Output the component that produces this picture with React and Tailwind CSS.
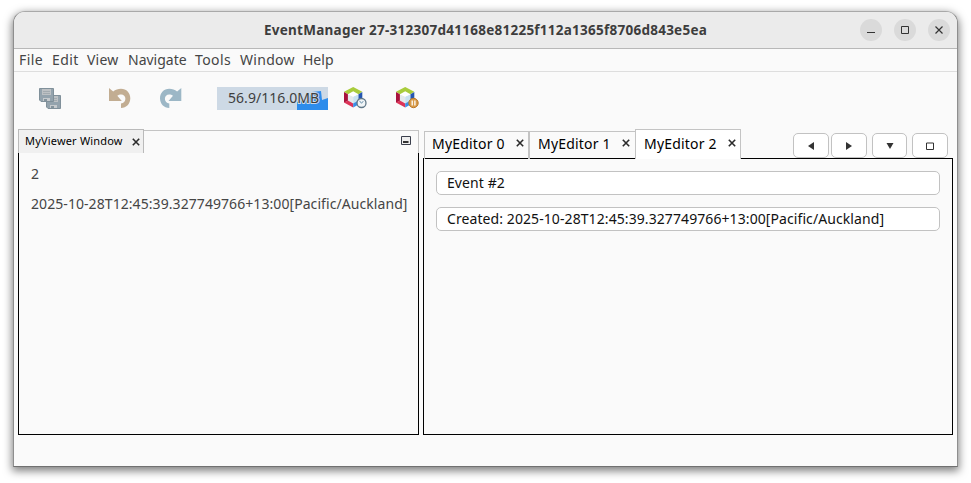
import React from "react";

const CUBE = (
  <>
    <path d="M3.800 7.300 9.200 9.500v7.800l-5.400-3.400z" fill="#e4eaec" />
    <path d="M9.200 9.500l5.400-2.400v6.700l-5.400 3.500z" fill="#c9e2f0" />
    <path d="M9.200 4.600 14.600 7.200 9.200 9.700 3.800 7.300z" fill="#fff" />
    <path d="M9.200 0 18.300 4.700 14.500 7.200 9.200 4.300 3.900 7.200 0 4.700z" fill="#a9cc3c" />
    <path d="M0 4.900 3.900 7.200v6.500L0 15.700z" fill="#a8123c" />
    <path d="M0 15.600 3.900 13.500 9.200 16.500V20.500z" fill="#dc3458" />
    <path d="M18.300 4.900 14.500 7.200v6.500l3.800 2z" fill="#2456b0" />
    <path d="M18.300 15.600 14.500 13.500 9.200 16.500V20.500z" fill="#3b8ee6" />
  </>
);

function ProfileIcon() {
  return (
    <svg className="block" width="24" height="22" viewBox="0 0 24 22">
      {CUBE}
      <circle cx="17.500" cy="16" r="4.500" fill="#f1f5f7" stroke="#617888" strokeWidth="1.300" />
      <path d="M15.500 13.800 17.500 16.300l1.800-2.200" fill="none" stroke="#6d93ad" strokeWidth="1" />
    </svg>
  );
}

function PauseIcon() {
  return (
    <svg className="block" width="24" height="22" viewBox="0 0 24 22">
      {CUBE}
      <circle cx="17.500" cy="16" r="4.700" fill="#d89a48" stroke="#b97728" strokeWidth="1" />
      <path d="M16.200 13.500v5M18.900 13.500v5" stroke="#fff" strokeWidth="1.300" />
    </svg>
  );
}

function Floppy({ x, y }) {
  return (
    <g transform={`translate(${x} ${y})`}>
      <path d="M.5.500h14v13H2l-1.500-1.500z" fill="#94a3ad" stroke="#80909a" />
      <path d="M3 1h9v6H3z" fill="#bdc1c4" />
      <path d="M4 3.500h7M4 5.500h7" stroke="#a3abb0" strokeWidth="1" />
      <path d="M4 10h7v3H4z" fill="#c6cacd" />
      <path d="M5 11h3v2H5z" fill="#85949d" />
    </g>
  );
}

function SaveAllIcon() {
  return (
    <svg className="block" width="23" height="22" viewBox="0 0 23 22">
      <Floppy x={7} y={7} />
      <Floppy x={0} y={0} />
    </svg>
  );
}

const ARROW = "M0 0 4.200 3.600C6.500 1.600 9 .800 12 .800 17.500 .800 21.300 5 21.300 10.300 21.300 15.800 17.500 20 12 20V15.500C14.600 15.200 16.400 13.200 16.400 10.700 16.400 8 14.600 6.400 12.200 6.400 10.600 6.400 9.400 6.900 8.300 7.800L12.800 12.900H0z";

function CloseX({ className }) {
  return (
    <svg className={className} width="8" height="8" viewBox="0 0 8 8">
      <path d="M.800.800l6.400 6.400M7.200.800L.800 7.200" stroke="#2b2b2b" strokeWidth="1.600" />
    </svg>
  );
}

function WindowButton({ children }) {
  return (
    <div className="flex size-[22px] items-center justify-center rounded-full bg-[#dadada]">
      <svg width="10" height="10" viewBox="0 0 10 10" fill="none" stroke="#333">{children}</svg>
    </div>
  );
}

function NavButton({ className, children }) {
  return (
    <div className={`flex h-[25px] items-center justify-center rounded-[5px] border border-[#c2c2c2] bg-white ${className}`}>
      <svg width="8" height="8" viewBox="0 0 8 8" fill="#333">{children}</svg>
    </div>
  );
}

function Field({ children }) {
  return (
    <div className="h-6 rounded-[5px] border border-[#c2c2c2] bg-white pl-[10px] text-[14px] leading-[22px] tracking-[0.085px] text-[#111] whitespace-nowrap">
      {children}
    </div>
  );
}

function EditorTab({ name, className }) {
  return (
    <div className={`flex shrink-0 items-start border-t border-r text-[14px] leading-[20px] text-black ${className}`}>
      <span className="w-[84px] whitespace-nowrap tracking-[0.2px]">{name}</span>
      <CloseX className="mt-[5px] shrink-0" />
    </div>
  );
}

export default function App() {
  return (
    <div className="h-[483px] w-[971px] overflow-hidden bg-white pt-[11px] pl-[13px] font-['Noto_Sans',sans-serif]">
      <div className="flex h-[456px] w-[945px] flex-col overflow-hidden rounded-t-[12px] border border-[#8e8e8e] border-t-[#a9a9a9] border-b-[#707070] bg-[#fafafa] shadow-[0_3px_9px_1px_rgba(0,0,0,0.5)]">
        <header className="flex h-[37px] shrink-0 items-center border-b border-[#b8b8b8] bg-[#ebebeb]">
          <h1 className="ml-[250px] w-[596px] whitespace-nowrap text-[13.5px] font-bold tracking-[0.255px] text-[#3d3d3d]">
            EventManager 27-312307d41168e81225f112a1365f8706d843e5ea
          </h1>
          <div className="flex gap-3">
            <WindowButton><path d="M1 7.500h8" /></WindowButton>
            <WindowButton><path d="M1.500 1.500h7v7h-7z" /></WindowButton>
            <WindowButton><path d="M1.500 1.500l7 7M8.500 1.500l-7 7" strokeWidth="1.200" /></WindowButton>
          </div>
        </header>

        <nav className="flex h-[23px] shrink-0 items-start border-b border-[#dedede] pl-[5px] text-[14px] leading-[21px] text-[#454545]">
          <span className="w-[33px] tracking-[0.4px]">File</span>
          <span className="w-[35px] tracking-[0.4px]">Edit</span>
          <span className="w-[41px] tracking-[0.2px]">View</span>
          <span className="w-[67px]">Navigate</span>
          <span className="w-[45px] tracking-[0.4px]">Tools</span>
          <span className="w-[63px] tracking-[0.3px]">Window</span>
          <span>Help</span>
        </nav>

        <div className="flex h-[57px] shrink-0 items-start pt-[15px] pl-[25px]">
          <div className="mt-px w-[70px]"><SaveAllIcon /></div>
          <svg className="mr-[29px] mt-px block" width="22" height="21" viewBox="0 0 22 21">
            <path d={ARROW} fill="#c2ad92" />
          </svg>
          <svg className="mr-[35px] mt-px block" width="22" height="21" viewBox="0 0 22 21">
            <path d={ARROW} transform="matrix(-1 0 0 1 21.300 0)" fill="#9cb7c6" />
          </svg>
          <div className="relative h-[23px] w-[111px] bg-[#cdd9e5]">
            <svg className="absolute inset-0" width="111" height="23" viewBox="0 0 111 23">
              <path d="M80 23V15l4-2 8-2 3-6 9-1 1 9 6-2v12z" fill="#2d8ceb" />
            </svg>
            <span className="absolute left-[11px] top-0 whitespace-nowrap text-[14px] leading-[22px] tracking-[0.05px] text-[#3e3e3e] [paint-order:stroke] [-webkit-text-stroke:2px_#cdd9e5]">
              56.9/116.0MB
            </span>
          </div>
          <div className="ml-4"><ProfileIcon /></div>
          <div className="ml-[28px]"><PauseIcon /></div>
        </div>

        <main className="flex h-[306px] shrink-0 items-start gap-1 pl-1">
          <section className="flex h-[306px] w-[401px] flex-col">
            <div className="flex h-6 shrink-0 items-start">
              <div className="flex h-6 w-[126px] items-center border border-b-0 border-[#bababa] bg-[#f0f0f0] pl-[6px] text-[11px] text-black">
                <span className="w-[107px] whitespace-nowrap tracking-[0.18px]">MyViewer Window</span>
                <CloseX className="shrink-0" />
              </div>
              <div className="mt-px flex h-[23px] flex-1 items-start justify-end border-r border-t border-[#c4c4c4] pr-[7px] pt-[5px]">
                <svg width="10" height="9" viewBox="0 0 10 9">
                  <path d="M.5.500h9v8h-9z" fill="#eee" stroke="#3a3f4c" />
                  <path d="M2 5h5.500v2H2z" fill="#333" />
                </svg>
              </div>
            </div>
            <div className="flex-1 border border-t-0 border-black pl-3 pt-[11px] text-[14px] leading-[20px] text-[#454545]">
              <p className="mb-[10px]">2</p>
              <p className="whitespace-nowrap tracking-[0.07px]">2025-10-28T12:45:39.327749766+13:00[Pacific/Auckland]</p>
            </div>
          </section>

          <section className="flex h-[306px] w-[530px] flex-col">
            <div className="flex h-[30px] shrink-0 items-end">
              <div className="flex h-[30px] w-[318px] items-end">
                <div className="h-px w-px bg-black" />
                <EditorTab name="MyEditor 0" className="h-[28px] w-[105px] border-l border-[#c4c4c4] pl-[7px] pt-[2px] shadow-[inset_0_-1px_0_#000]" />
                <EditorTab name="MyEditor 1" className="h-[28px] w-[106px] border-l border-r-0 border-[#c4c4c4] pl-[8px] pt-[2px] shadow-[inset_0_-1px_0_#000]" />
                <EditorTab name="MyEditor 2" className="h-[30px] w-[106px] border-l border-[#c4c4c4] bg-white pl-[8px] pt-[4px]" />
              </div>
              <div className="flex h-[26px] flex-1 border-b border-black pl-[52px]">
                <NavButton className="w-9"><path d="M1 4l6-4v8z" /></NavButton>
                <NavButton className="ml-[2px] w-9"><path d="M7 4L1 0v8z" /></NavButton>
                <NavButton className="ml-[5px] w-[35px]"><path d="M.5 1h7L4 7z" /></NavButton>
                <NavButton className="ml-[5px] w-9"><path d="M.5 1h7v6.500h-7z" fill="none" stroke="#333" /></NavButton>
              </div>
            </div>
            <div className="flex flex-1 flex-col gap-3 border border-t-0 border-black px-3 pt-3">
              <Field>Event #2</Field>
              <Field>Created: 2025-10-28T12:45:39.327749766+13:00[Pacific/Auckland]</Field>
            </div>
          </section>
        </main>
      </div>
    </div>
  );
}
